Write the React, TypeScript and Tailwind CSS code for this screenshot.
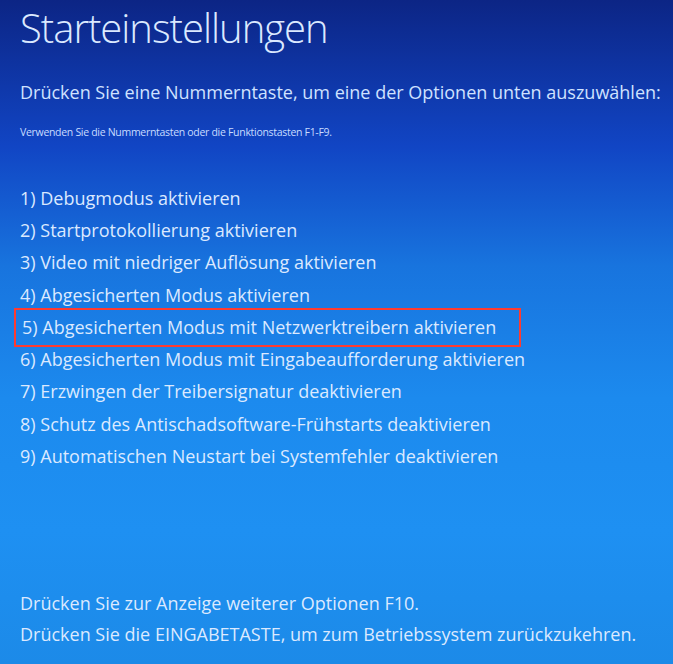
const options = [
  "1) Debugmodus aktivieren",
  "2) Startprotokollierung aktivieren",
  "3) Video mit niedriger Auflösung aktivieren",
  "4) Abgesicherten Modus aktivieren",
  "5) Abgesicherten Modus mit Netzwerktreibern aktivieren",
  "6) Abgesicherten Modus mit Eingabeaufforderung aktivieren",
  "7) Erzwingen der Treibersignatur deaktivieren",
  "8) Schutz des Antischadsoftware-Frühstarts deaktivieren",
  "9) Automatischen Neustart bei Systemfehler deaktivieren",
];

export default function App() {
  return (
    <div className="w-[673px] h-[664px] overflow-hidden bg-[linear-gradient(180deg,#0c2585_0%,#1145c4_22%,#1874de_40%,#1c8aee_60%,#1e90f2_80%,#1c8ae8_100%)] text-[#dbe9ff] font-['Open_Sans',sans-serif]">
      <div className="pl-5 pt-[2px]">
        <h1 className="text-[40px] font-light leading-[52px] tracking-[-1px]">Starteinstellungen</h1>
        <p className="mt-[26px] text-[18px] leading-[24px] text-[#cfe2ff]">
          Drücken Sie eine Nummerntaste, um eine der Optionen unten auszuwählen:
        </p>
        <p className="mt-[20px] text-[10.5px] leading-[16px] tracking-[-0.3px] text-[#c8dcff]">
          Verwenden Sie die Nummerntasten oder die Funktionstasten F1-F9.
        </p>
        <ul className="mt-[42px] flex flex-col">
          {options.map((o, i) => (
            <li
              key={o}
              className={
                i === 4
                  ? "-ml-[6px] pl-[6px] w-[507px] h-[39px] -my-[3.35px] flex items-center border-2 border-[#ff3b30] text-[18px]"
                  : "h-[32.3px] flex items-center text-[18px]"
              }
            >
              {o}
            </li>
          ))}
        </ul>
        <div className="mt-[115px] flex flex-col">
          <p className="h-[31px] flex items-center text-[18px]">
            Drücken Sie zur Anzeige weiterer Optionen F10.
          </p>
          <p className="h-[31px] flex items-center text-[18px]">
            Drücken Sie die EINGABETASTE, um zum Betriebssystem zurückzukehren.
          </p>
        </div>
      </div>
    </div>
  );
}
